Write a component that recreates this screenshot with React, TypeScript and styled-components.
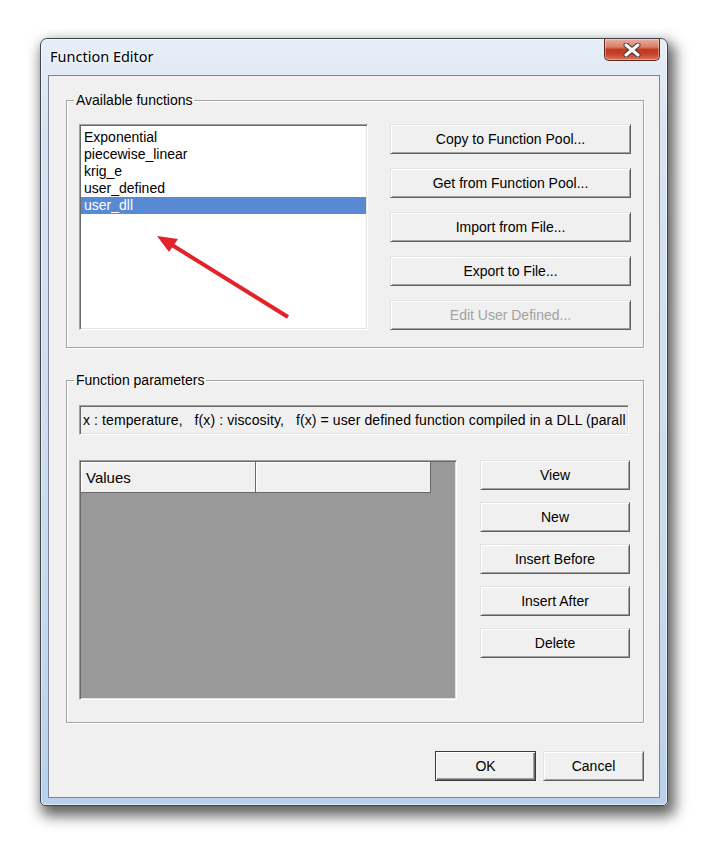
import React from 'react';
import styled, { createGlobalStyle } from 'styled-components';

const Global = createGlobalStyle`
  html, body { margin: 0; padding: 0; background: #ffffff; }
  body {
    font-family: "Liberation Sans", Arial, sans-serif;
    font-size: 14px;
    color: #000;
  }
`;

const Page = styled.div`
  width: 713px;
  height: 845px;
  box-sizing: border-box;
  padding: 38px 0 0 40px;
`;

const Window = styled.div`
  width: 628px;
  box-sizing: border-box;
  display: flex;
  flex-direction: column;
  padding: 0 7px 7px;
  border: 1px solid #3f454d;
  border-radius: 7px 7px 5px 5px;
  background: linear-gradient(to bottom, #e7eef7 0%, #d8e4f2 12%, #c9daee 70%, #b8d0ec 100%);
  box-shadow: inset 0 0 0 1px rgba(255, 255, 255, 0.55), 4px 7px 14px 3px rgba(0, 0, 0, 0.62);
`;

const TitleBar = styled.div`
  height: 36px;
  display: flex;
  justify-content: space-between;
  align-items: flex-start;
  padding-left: 2px;
`;

const Title = styled.div`
  margin-top: 7px;
  font-family: "Noto Sans", "Open Sans", sans-serif;
  font-size: 14.5px;
  line-height: 20px;
  color: #000;
  text-shadow: 0 0 6px #ffffff, 0 0 3px #ffffff;
`;

const CloseBtn = styled.div`
  width: 56px;
  height: 22px;
  box-sizing: border-box;
  border: 1px solid #5c2a22;
  border-top: none;
  border-radius: 0 0 5px 5px;
  background: linear-gradient(to bottom, #e9ad9f 0%, #dc7e69 38%, #c2391f 50%, #c4412a 70%, #dc7258 100%);
  box-shadow: inset 0 0 0 1px rgba(255, 220, 210, 0.45);
  display: flex;
  align-items: center;
  justify-content: center;
`;

const Client = styled.div`
  border: 1px solid #7b8591;
  background: #f0f0f0;
  display: flex;
  flex-direction: column;
  padding: 16px 15px 16px 17px;
`;

const Group = styled.fieldset<{ $gap?: number }>`
  margin: ${(p) => (p.$gap ? `${p.$gap}px` : '0')} 0 0 0;
  padding: 0;
  width: 578px;
  box-sizing: border-box;
  min-width: 0;
  border: 1px solid #a5a5a5;
  box-shadow: inset 1px 1px 0 #ffffff, 1px 1px 0 #ffffff;
`;

const Legend = styled.legend`
  margin-left: 7px;
  padding: 0 2px;
  font-size: 14px;
  line-height: 16px;
`;

const TopBody = styled.div`
  display: flex;
  gap: 22px;
  padding: 16px 12px 17px 12px;
`;

const ParamBody = styled.div`
  display: flex;
  flex-direction: column;
  gap: 25px;
  padding: 17px 12px 22px 12px;
`;

const ListBox = styled.div`
  position: relative;
  width: 289px;
  height: 206px;
  box-sizing: border-box;
  background: #ffffff;
  border: 1px solid;
  border-color: #a0a0a0 #ffffff #ffffff #a0a0a0;
  box-shadow: inset 1px 1px 0 #696969, inset -1px -1px 0 #e3e3e3;
  padding: 4px 1px 0 1px;
`;

const ListItem = styled.div<{ $selected?: boolean }>`
  height: 17px;
  line-height: 17px;
  padding-left: 3px;
  font-size: 14px;
  background: ${(p) => (p.$selected ? '#5889d3' : 'transparent')};
  color: ${(p) => (p.$selected ? '#ffffff' : '#000000')};
`;

const ArrowLayer = styled.svg`
  position: absolute;
  left: 0;
  top: 0;
  width: 287px;
  height: 204px;
  pointer-events: none;
`;

const ButtonColumn = styled.div<{ $width: number; $gap: number }>`
  display: flex;
  flex-direction: column;
  gap: ${(p) => p.$gap}px;
  width: ${(p) => p.$width}px;
`;

const Button = styled.button<{ $width?: number; $default?: boolean }>`
  width: ${(p) => (p.$width ? `${p.$width}px` : '100%')};
  height: 30px;
  box-sizing: border-box;
  padding: 0;
  margin: 0;
  font-family: "Liberation Sans", Arial, sans-serif;
  font-size: 14px;
  color: ${(p) => (p.disabled ? '#a3a3a3' : '#000000')};
  background: #f0f0f0;
  border: 1px solid;
  border-color: ${(p) => (p.$default ? '#3a3a3a' : '#e3e3e3 #5f5f5f #5f5f5f #e3e3e3')};
  box-shadow: ${(p) =>
    p.$default
      ? 'inset 1px 1px 0 #ffffff, inset -1px -1px 0 #6a6a6a, inset -2px -2px 0 #a0a0a0'
      : 'inset 1px 1px 0 #ffffff, inset -1px -1px 0 #a0a0a0'};
  cursor: default;
`;

const TextField = styled.div`
  width: 550px;
  height: 30px;
  box-sizing: border-box;
  background: #f0f0f0;
  border: 1px solid;
  border-color: #a0a0a0 #ffffff #ffffff #a0a0a0;
  box-shadow: inset 1px 1px 0 #696969, inset -1px -1px 0 #e3e3e3;
  padding-left: 3px;
  display: flex;
  align-items: center;
  overflow: hidden;
  white-space: pre;
  font-size: 14px;
  letter-spacing: 0.1px;
`;

const ParamRow = styled.div`
  display: flex;
  gap: 23px;
  align-items: flex-start;
`;

const Grid = styled.div`
  width: 378px;
  height: 240px;
  box-sizing: border-box;
  background: #999999;
  border: 1px solid;
  border-color: #a0a0a0 #ffffff #ffffff #a0a0a0;
  box-shadow: inset 1px 1px 0 #696969, inset -1px -1px 0 #e3e3e3;
  padding: 1px;
`;

const GridHeader = styled.div`
  display: flex;
`;

const HeaderCell = styled.div`
  width: 175px;
  height: 31px;
  box-sizing: border-box;
  background: #f0f0f0;
  border-right: 1px solid #6a6a6a;
  border-bottom: 1px solid #6a6a6a;
  box-shadow: inset 1px 1px 0 #ffffff;
  padding-left: 5px;
  display: flex;
  align-items: center;
  font-size: 15px;
`;

const Footer = styled.div`
  display: flex;
  justify-content: flex-end;
  gap: 7px;
  margin-top: 28px;
`;

const items = ['Exponential', 'piecewise_linear', 'krig_e', 'user_defined', 'user_dll'];

export default function App() {
  return (
    <Page>
      <Global />
      <Window>
        <TitleBar>
          <Title>Function Editor</Title>
          <CloseBtn>
            <svg width="18" height="14" viewBox="0 0 18 14">
              <path d="M3 2 L15 12 M15 2 L3 12" stroke="#3b3b3b" strokeWidth="5" strokeLinecap="round" />
              <path d="M3 2 L15 12 M15 2 L3 12" stroke="#ffffff" strokeWidth="3" strokeLinecap="round" />
            </svg>
          </CloseBtn>
        </TitleBar>
        <Client>
          <Group>
            <Legend>Available functions</Legend>
            <TopBody>
              <ListBox>
                {items.map((it) => (
                  <ListItem key={it} $selected={it === 'user_dll'}>
                    {it}
                  </ListItem>
                ))}
                <ArrowLayer viewBox="0 0 287 204">
                  <line x1="208" y1="192" x2="92" y2="120" stroke="#e3232a" strokeWidth="4" />
                  <polygon points="77,111 98,114 89,127" fill="#e3232a" />
                </ArrowLayer>
              </ListBox>
              <ButtonColumn $width={241} $gap={14}>
                <Button>Copy to Function Pool...</Button>
                <Button>Get from Function Pool...</Button>
                <Button>Import from File...</Button>
                <Button>Export to File...</Button>
                <Button disabled>Edit User Defined...</Button>
              </ButtonColumn>
            </TopBody>
          </Group>
          <Group $gap={24}>
            <Legend>Function parameters</Legend>
            <ParamBody>
              <TextField>
                {'x : temperature,   f(x) : viscosity,   f(x) = user defined function compiled in a DLL (parall'}
              </TextField>
              <ParamRow>
                <Grid>
                  <GridHeader>
                    <HeaderCell>Values</HeaderCell>
                    <HeaderCell />
                  </GridHeader>
                </Grid>
                <ButtonColumn $width={150} $gap={12}>
                  <Button>View</Button>
                  <Button>New</Button>
                  <Button>Insert Before</Button>
                  <Button>Insert After</Button>
                  <Button>Delete</Button>
                </ButtonColumn>
              </ParamRow>
            </ParamBody>
          </Group>
          <Footer>
            <Button $width={101} $default>
              OK
            </Button>
            <Button $width={101}>Cancel</Button>
          </Footer>
        </Client>
      </Window>
    </Page>
  );
}
